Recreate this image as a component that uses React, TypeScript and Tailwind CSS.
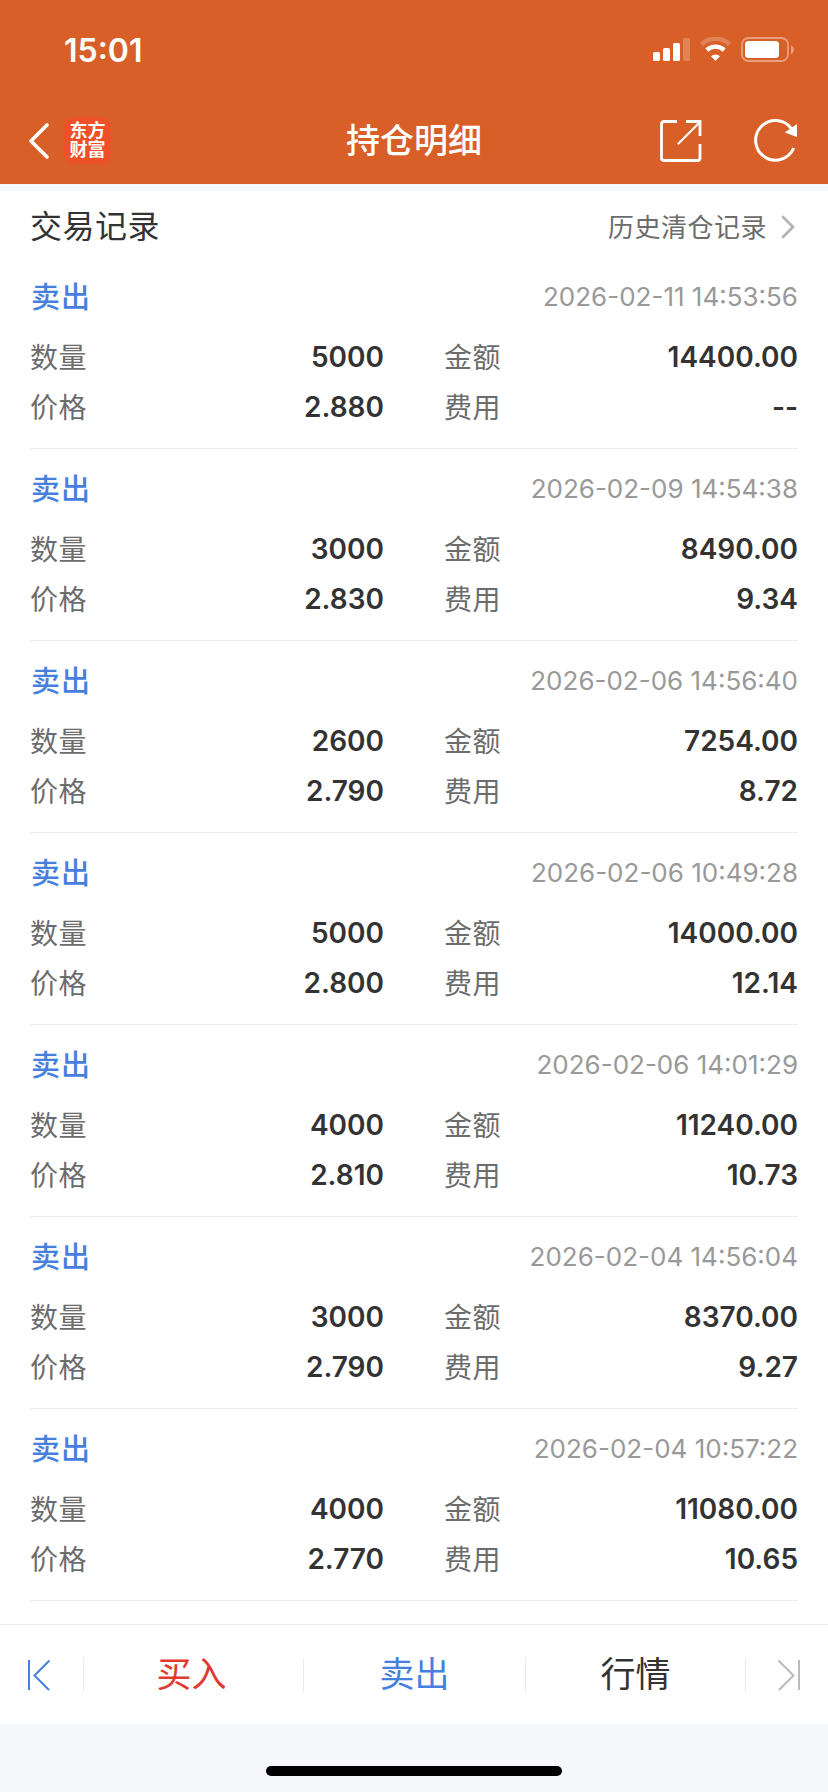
import React from 'react';

interface TradeRecord {
  time: string;
  quantity: string;
  amount: string;
  price: string;
  fee: string;
}

const records: TradeRecord[] = [
  { time: '2026-02-11 14:53:56', quantity: '5000', amount: '14400.00', price: '2.880', fee: '--' },
  { time: '2026-02-09 14:54:38', quantity: '3000', amount: '8490.00', price: '2.830', fee: '9.34' },
  { time: '2026-02-06 14:56:40', quantity: '2600', amount: '7254.00', price: '2.790', fee: '8.72' },
  { time: '2026-02-06 10:49:28', quantity: '5000', amount: '14000.00', price: '2.800', fee: '12.14' },
  { time: '2026-02-06 14:01:29', quantity: '4000', amount: '11240.00', price: '2.810', fee: '10.73' },
  { time: '2026-02-04 14:56:04', quantity: '3000', amount: '8370.00', price: '2.790', fee: '9.27' },
  { time: '2026-02-04 10:57:22', quantity: '4000', amount: '11080.00', price: '2.770', fee: '10.65' },
];

const StatusBar: React.FC = () => (
  <div className="flex h-[100px] items-center justify-between pl-[64px] pr-[33px]">
    <span className="pt-[2px] text-[32px] font-semibold leading-none text-white">15:01</span>
    <svg width="142" height="26" viewBox="0 0 142 26" fill="white">
      <rect x="0" y="15" width="7" height="9" rx="1.6" />
      <rect x="10" y="11" width="7" height="13" rx="1.6" />
      <rect x="20" y="6" width="7" height="18" rx="1.6" />
      <rect x="30" y="1" width="7" height="23" rx="1.6" opacity="0.22" />
      <path d="M48.5 7.5A20 20 0 0 1 76.5 7.5" fill="none" stroke="white" strokeWidth="4.6" opacity="0.22" />
      <path d="M53.8 13A13 13 0 0 1 71.2 13" fill="none" stroke="white" strokeWidth="4.4" />
      <path d="M62.5 24L58 19.2A6.5 6.5 0 0 1 67 19.2Z" />
      <rect x="89" y="1" width="46" height="23" rx="6.5" fill="none" stroke="white" strokeWidth="1.8" opacity="0.4" />
      <rect x="92" y="4" width="34" height="17" rx="3.5" />
      <path d="M138 8.5v8.5c1.8-.8 3-2.4 3-4.25s-1.2-3.45-3-4.25z" opacity="0.4" />
    </svg>
  </div>
);

const NavBar: React.FC = () => (
  <div className="grid h-[84px] grid-cols-3 items-center pb-1">
    <div className="flex items-center gap-[14px] pl-7">
      <svg width="22" height="38" viewBox="0 0 22 38" fill="none" stroke="white" strokeWidth="3.6" strokeLinecap="round" strokeLinejoin="round">
        <path d="M19 4L3 20L19 36" />
      </svg>
      <div className="flex h-[47px] w-[47px] flex-col items-center justify-center rounded-[10px] bg-[#ee5128] text-[18px] font-bold leading-[19px] text-white">
        <span>东方</span>
        <span>财富</span>
      </div>
    </div>
    <h1 className="pt-px text-center text-[34px] font-medium leading-none text-white">持仓明细</h1>
    <div className="flex items-center justify-end gap-[50px] pr-[31px]">
      <svg width="44" height="44" viewBox="0 0 44 44" fill="none" stroke="white" strokeWidth="2.8">
        <path d="M18 3.5H5Q2.5 3.5 2.5 6V40Q2.5 42.5 5 42.5H38.5Q41 42.5 41 40V26" />
        <path d="M27 3.5H41V18" />
        <path d="M19.5 25.5L40.5 4.5" strokeWidth="2.2" strokeLinecap="round" />
      </svg>
      <svg width="44" height="44" viewBox="0 0 44 44" fill="none" stroke="white" strokeWidth="3">
        <path d="M38.4 10.6A19.8 19.8 0 1 0 40.7 30" />
        <path d="M44 6V19L31.7 14.5Z" fill="white" stroke="none" />
      </svg>
    </div>
  </div>
);

const Field: React.FC<{ label: string; value: string }> = ({ label, value }) => (
  <div className="flex h-[50px] items-center justify-between">
    <span className="pt-[2px] text-[28px] tracking-[0.6px] text-[#6c6c6c]">{label}</span>
    <span className="text-[28px] font-semibold text-[#333]">{value}</span>
  </div>
);

const RecordItem: React.FC<{ record: TradeRecord }> = ({ record }) => (
  <li className="h-48 border-b border-[#ebebeb] pt-4">
    <div className="flex h-12 items-center justify-between">
      <span className="pl-px pt-[2px] text-[29px] font-medium tracking-[1px] text-[#4680df]">卖出</span>
      <span className="pb-px text-[26px] text-[#999]">{record.time}</span>
    </div>
    <div className="mt-[11px] grid grid-cols-2 gap-x-[60px]">
      <Field label="数量" value={record.quantity} />
      <Field label="金额" value={record.amount} />
      <Field label="价格" value={record.price} />
      <Field label="费用" value={record.fee} />
    </div>
  </li>
);

const BottomBar: React.FC = () => (
  <footer className="flex h-[100px] items-center border-t border-[#ebebeb] bg-white text-[35px]">
    <button className="flex h-[34px] w-[84px] items-center border-r border-[#ebebeb] pl-7">
      <svg width="24" height="32" viewBox="0 0 24 32" fill="none" stroke="#4680df" strokeWidth="2">
        <path d="M1 1V31M21.5 1.5L6.5 16.5L21 31" />
      </svg>
    </button>
    <button className="flex h-[34px] w-[220px] items-center justify-center border-r border-[#ebebeb] pr-1 text-[#e03a30]">买入</button>
    <button className="flex h-[34px] w-[222px] items-center justify-center border-r border-[#ebebeb] text-[#4680df]">卖出</button>
    <button className="flex h-[34px] w-[220px] items-center justify-center border-r border-[#ebebeb] text-[#333]">行情</button>
    <button className="flex h-[34px] flex-1 items-center justify-end pr-7">
      <svg width="24" height="32" viewBox="0 0 24 32" fill="none" stroke="#bbb" strokeWidth="2">
        <path d="M23 1V31M2.5 1.5L17.5 16.5L3 31" />
      </svg>
    </button>
  </footer>
);

export default function App() {
  return (
    <div className="flex h-[1792px] w-[828px] flex-col overflow-hidden bg-[#f6f7fa] font-['Inter','Noto_Sans_CJK_SC',sans-serif]">
      <header className="h-[184px] bg-[#d86028]">
        <StatusBar />
        <NavBar />
      </header>

      <main className="mt-[7px] h-[1433px] bg-white px-[30px]">
        <div className="flex h-[66px] items-center justify-between pt-[6px]">
          <h2 className="text-[32px] tracking-[0.5px] text-[#333]">交易记录</h2>
          <a className="flex items-center gap-[14px] text-[26px] tracking-[0.5px] text-[#6c6c6c]">
            历史清仓记录
            <svg width="17" height="24" viewBox="0 0 17 24" fill="none" stroke="#b4b4b4" strokeWidth="2.8" strokeLinecap="round">
              <path d="M2 2L12 12L2 22" />
            </svg>
          </a>
        </div>
        <ul>
          {records.map((record) => (
            <RecordItem key={record.time} record={record} />
          ))}
        </ul>
      </main>

      <BottomBar />

      <div className="flex flex-1 justify-center pt-[42px]">
        <div className="h-[10px] w-[296px] rounded-full bg-black" />
      </div>
    </div>
  );
}
